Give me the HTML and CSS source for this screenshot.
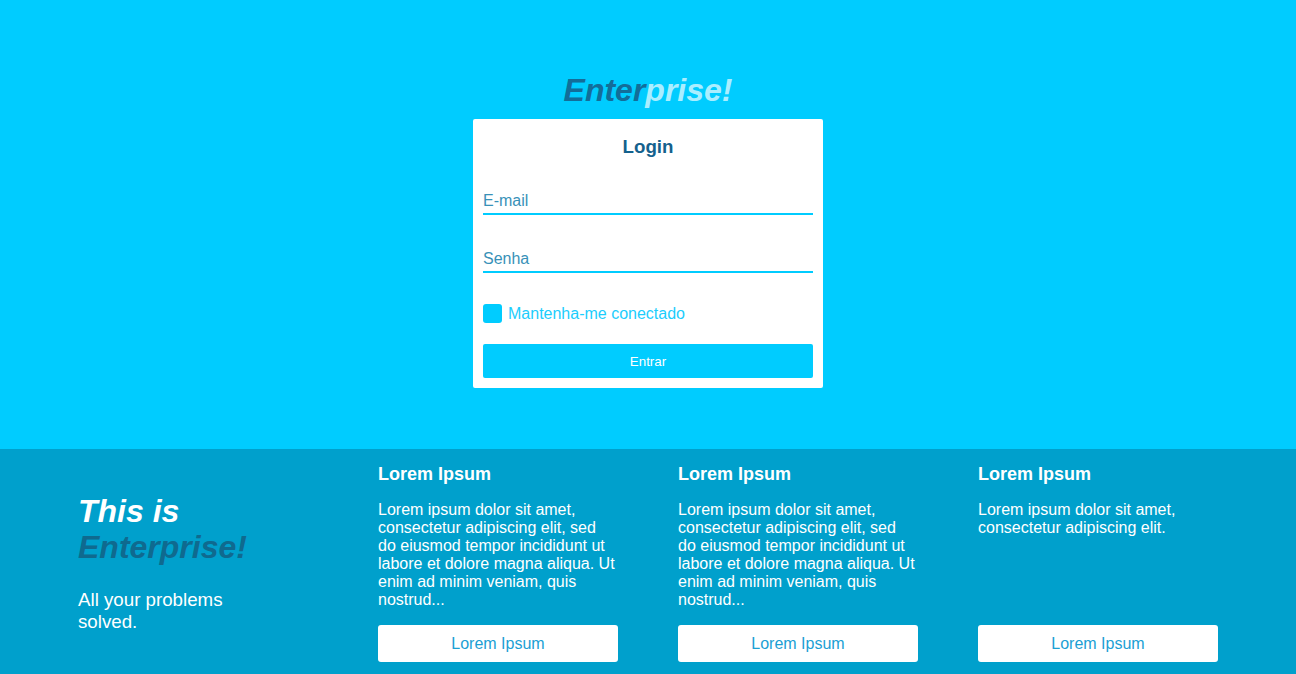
FILE: index.html
```html
<!DOCTYPE html>
<html lang="pt">
<head>
<meta charset="utf-8">
<title>Enterprise!</title>
<link rel="stylesheet" href="styles.css">
</head>
<body>
<section class="hero">
  <h1 class="logo"><span class="logo-dark">Enter</span><span class="logo-light">prise!</span></h1>
  <form class="card">
    <h3 class="card-title">Login</h3>
    <input class="field field-email" type="text" placeholder="E-mail">
    <input class="field field-pass" type="password" placeholder="Senha">
    <label class="remember"><input class="check" type="checkbox"><span>Mantenha-me conectado</span></label>
    <button class="btn-enter" type="button">Entrar</button>
  </form>
</section>
<section class="features">
  <div class="feature-grid">
    <div class="intro">
      <h2 class="intro-title">This is<br><span class="intro-brand">Enterprise!</span></h2>
      <p class="intro-text">All your problems solved.</p>
    </div>
    <div class="feature">
      <h4 class="feature-title">Lorem Ipsum</h4>
      <p class="feature-text">Lorem ipsum dolor sit amet, consectetur adipiscing elit, sed do eiusmod tempor incididunt ut labore et dolore magna aliqua. Ut enim ad minim veniam, quis nostrud...</p>
      <button class="btn-light" type="button">Lorem Ipsum</button>
    </div>
    <div class="feature">
      <h4 class="feature-title">Lorem Ipsum</h4>
      <p class="feature-text">Lorem ipsum dolor sit amet, consectetur adipiscing elit, sed do eiusmod tempor incididunt ut labore et dolore magna aliqua. Ut enim ad minim veniam, quis nostrud...</p>
      <button class="btn-light" type="button">Lorem Ipsum</button>
    </div>
    <div class="feature">
      <h4 class="feature-title">Lorem Ipsum</h4>
      <p class="feature-text">Lorem ipsum dolor sit amet, consectetur adipiscing elit.</p>
      <button class="btn-light" type="button">Lorem Ipsum</button>
    </div>
  </div>
</section>
</body>
</html>
```
FILE: styles.css
```css
* { box-sizing: border-box; }
html, body { margin: 0; padding: 0; }
body {
  font-family: "Liberation Sans", Arial, sans-serif;
  background: #00a0cc;
}
.hero {
  height: 449px;
  background: #00ccff;
  padding-top: 72px;
  display: flex;
  flex-direction: column;
  align-items: center;
}
.logo {
  margin: 0;
  font-size: 32px;
  line-height: 37px;
  font-weight: bold;
  font-style: italic;
}
.logo-dark { color: #136d99; }
.logo-light { color: #aaeeff; }
.card {
  margin-top: 10px;
  width: 350px;
  background: #fff;
  border-radius: 2px;
  padding: 17px 10px 10px;
  display: flex;
  flex-direction: column;
}
.card-title {
  margin: 0;
  text-align: center;
  font-size: 18.72px;
  line-height: 22px;
  color: #14618d;
}
.field {
  display: block;
  width: 100%;
  height: 22px;
  padding: 0 0 4px;
  border: none;
  border-bottom: 2px solid #00ccff;
  font-family: inherit;
  font-size: 16px;
  color: #3891b8;
  outline: none;
  background: transparent;
}
.field::placeholder { color: #3891b8; opacity: 1; }
.field-email { margin-top: 35px; }
.field-pass { margin-top: 36px; }
.remember {
  margin-top: 31px;
  display: flex;
  align-items: center;
  gap: 6px;
  font-size: 16px;
  color: #1ccdfd;
  height: 19px;
}
.check {
  appearance: none;
  -webkit-appearance: none;
  margin: 0;
  width: 19px;
  height: 19px;
  border-radius: 3px;
  background: #00ccff;
}
.btn-enter {
  margin-top: 21px;
  height: 34px;
  border: none;
  border-radius: 2px;
  background: #00ccff;
  color: #fff;
  font-family: inherit;
  font-size: 13.33px;
}
.features {
  background: #00a0cc;
  padding: 15px 0 12px;
}
.feature-grid {
  width: 1140px;
  margin: 0 auto;
  display: grid;
  grid-template-columns: repeat(4, 240px);
  column-gap: 60px;
}
.intro { padding-top: 29px; }
.intro-title {
  margin: 0;
  font-size: 32px;
  line-height: 36px;
  font-style: italic;
  font-weight: bold;
  color: #fff;
}
.intro-brand { color: #0f6a8f; }
.intro-text {
  margin: 24px 0 0;
  max-width: 180px;
  font-size: 18.72px;
  line-height: 22px;
  color: #fff;
}
.feature {
  display: flex;
  flex-direction: column;
  color: #fff;
}
.feature-title {
  margin: 0;
  font-size: 18px;
  line-height: 20px;
}
.feature-text {
  margin: 17px 0 16px;
  font-size: 16px;
  line-height: 18px;
  flex: 1;
}
.btn-light {
  height: 37px;
  border: none;
  border-radius: 3px;
  background: #fff;
  color: #1ba0d4;
  font-family: inherit;
  font-size: 16px;
}
```
